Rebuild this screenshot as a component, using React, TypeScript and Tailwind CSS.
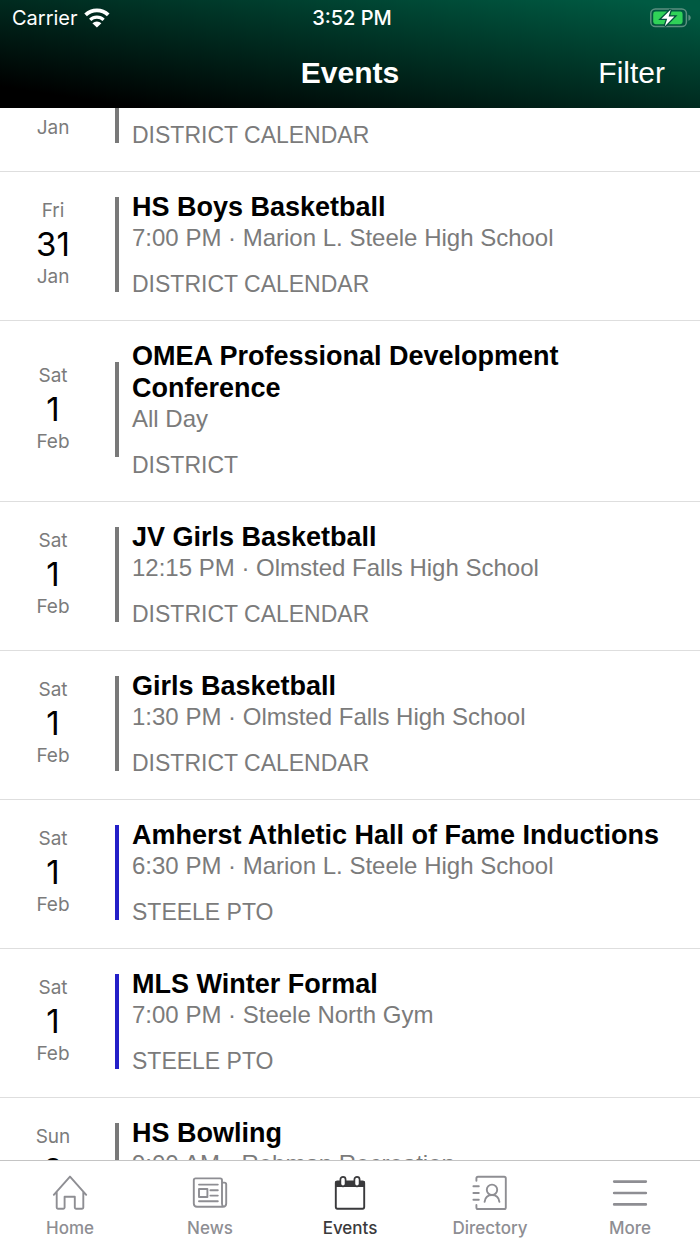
import React, { useLayoutEffect, useRef } from 'react';

interface SchoolEvent {
  weekday: string;
  day: string;
  month: string;
  title: string;
  time: string;
  calendar: string;
  pto?: boolean;
}

const EVENTS: SchoolEvent[] = [
  { weekday: '', day: '', month: 'Jan', title: '', time: '', calendar: 'DISTRICT CALENDAR' },
  { weekday: 'Fri', day: '31', month: 'Jan', title: 'HS Boys Basketball', time: '7:00 PM · Marion L. Steele High School', calendar: 'DISTRICT CALENDAR' },
  { weekday: 'Sat', day: '1', month: 'Feb', title: 'OMEA Professional Development Conference', time: 'All Day', calendar: 'DISTRICT' },
  { weekday: 'Sat', day: '1', month: 'Feb', title: 'JV Girls Basketball', time: '12:15 PM · Olmsted Falls High School', calendar: 'DISTRICT CALENDAR' },
  { weekday: 'Sat', day: '1', month: 'Feb', title: 'Girls Basketball', time: '1:30 PM · Olmsted Falls High School', calendar: 'DISTRICT CALENDAR' },
  { weekday: 'Sat', day: '1', month: 'Feb', title: 'Amherst Athletic Hall of Fame Inductions', time: '6:30 PM · Marion L. Steele High School', calendar: 'STEELE PTO', pto: true },
  { weekday: 'Sat', day: '1', month: 'Feb', title: 'MLS Winter Formal', time: '7:00 PM · Steele North Gym', calendar: 'STEELE PTO', pto: true },
  { weekday: 'Sun', day: '2', month: 'Feb', title: 'HS Bowling', time: '9:00 AM · Rebman Recreation', calendar: 'DISTRICT CALENDAR' },
];

const WifiIcon = () => (
  <svg width="26" height="20" viewBox="0 0 26 20" fill="none" stroke="white" aria-hidden="true">
    <path d="M1.6 6.9a16.3 16.3 0 0 1 22.6 0" strokeWidth="3.8" />
    <path d="M6.2 11.8a9.6 9.6 0 0 1 13.4 0" strokeWidth="3.2" />
    <path d="M8.4 15.2a6.6 6.6 0 0 1 9 0L12.9 19.6z" fill="white" stroke="none" />
  </svg>
);

const BatteryIcon = () => (
  <svg width="42" height="20" viewBox="0 0 42 20" aria-hidden="true">
    <rect x="0.8" y="1" width="35.6" height="17.6" rx="4.6" fill="none" stroke="#5c8f80" strokeWidth="1.5" />
    <path d="M38.4 6.8c1.6.5 2.3 1.6 2.3 3s-.7 2.5-2.3 3z" fill="#5c8f80" />
    <rect x="3.2" y="3.6" width="29.4" height="12.6" rx="2.4" fill="#30d158" />
    <path d="M20.8 1.6 11.4 10.8h5.8l-2.4 7.4L24.4 8.6h-5.8z" fill="white" stroke="#004f3b" strokeWidth="2.6" paintOrder="stroke" />
  </svg>
);

const HomeIcon = () => (
  <svg width="36" height="36" viewBox="0 0 36 36" fill="none" stroke="currentColor" strokeWidth="1.9" strokeLinecap="round" strokeLinejoin="round" aria-hidden="true">
    <path d="M1.8 19.8 18 1.6l16.2 18.2M4.7 17v15.6q0 1.2 1.2 1.2h5.5q1.2 0 1.2-1.2V21.8h10.2v10.8q0 1.2 1.2 1.2h6.1q1.2 0 1.2-1.2V17" />
  </svg>
);

const NewsIcon = () => (
  <svg width="36" height="36" viewBox="0 0 36 36" fill="none" stroke="currentColor" strokeWidth="1.9" strokeLinecap="round" strokeLinejoin="round" aria-hidden="true">
    <path d="M30 28.5V5.2q0-1.8-1.8-1.8H3.6q-1.8 0-1.8 1.8v23.4q0 3.2 3.2 3.2h26q3.2 0 3.2-3.2V9.4q0-1.8-1.8-1.8H30M30 28.5q0 2.2 1.2 3" />
    <path d="M7 9.6h18.8M7 26.2h18.8M18.4 15.2h7.4M18.4 20.6h7.4M7 14h8.4v8H7z" />
  </svg>
);

const EventsIcon = () => (
  <svg width="36" height="36" viewBox="0 0 36 36" fill="none" stroke="currentColor" strokeLinejoin="round" aria-hidden="true">
    <path d="M3.4 6h29.2v6H3.4z" fill="currentColor" stroke="none" />
    <rect x="3.8" y="6.5" width="28.4" height="27.2" rx="1.6" strokeWidth="1.9" />
    <rect x="8.4" y="1.8" width="5.2" height="9.6" rx="2.6" fill="white" strokeWidth="1.7" />
    <rect x="22.4" y="1.8" width="5.2" height="9.6" rx="2.6" fill="white" strokeWidth="1.7" />
  </svg>
);

const DirectoryIcon = () => (
  <svg width="36" height="36" viewBox="0 0 36 36" fill="none" stroke="currentColor" strokeWidth="1.9" strokeLinecap="round" strokeLinejoin="round" aria-hidden="true">
    <path d="M4.4 5.8V3.4q0-1.6 1.6-1.6h26.2q1.6 0 1.6 1.6v29q0 1.6-1.6 1.6H6q-1.6 0-1.6-1.6V30" />
    <path d="M1.4 11.2h5.4M1.4 18h5.4M1.4 24.8h5.4" />
    <circle cx="20" cy="14.8" r="5.2" />
    <path d="M12.6 26.8c.6-4.2 3.3-6.8 7.4-6.8s6.8 2.6 7.4 6.8" />
  </svg>
);

const MoreIcon = () => (
  <svg width="36" height="36" viewBox="0 0 36 36" fill="none" stroke="currentColor" strokeWidth="2.7" strokeLinecap="round" aria-hidden="true">
    <path d="M2.2 6.6h31.6M2.2 18h31.6M2.2 29.4h31.6" />
  </svg>
);

const TABS = [
  { label: 'Home', icon: HomeIcon },
  { label: 'News', icon: NewsIcon },
  { label: 'Events', icon: EventsIcon, active: true },
  { label: 'Directory', icon: DirectoryIcon },
  { label: 'More', icon: MoreIcon },
];

const EventRow = ({ event }: { event: SchoolEvent }) => (
  <li className="flex items-center border-b border-[#dedede] pt-4 pb-5">
    <div className="flex w-[106px] shrink-0 flex-col items-center font-[Inter,sans-serif] text-[19px] text-[#7b7b7b]">
      <span className="h-8 leading-8">{event.weekday}</span>
      <span className="h-[34px] text-[33px] leading-[34px] text-black">{event.day}</span>
      <span className="h-8 leading-8">{event.month}</span>
    </div>
    <div className={`ml-[9px] h-[95px] w-1 shrink-0 ${event.pto ? 'bg-[#2420c8]' : 'bg-[#797979]'}`} />
    <div className="min-w-0 flex-1 pt-[3px] pr-8 pb-px pl-[13px] text-[#7b7b7b]">
      <h2 className="min-h-8 text-[27px] leading-8 font-bold text-black">{event.title}</h2>
      <p className="min-h-[30px] text-[24px] leading-[30px]">{event.time}</p>
      <p className="mt-4 text-[23px] leading-[30px]">{event.calendar}</p>
    </div>
  </li>
);

const App: React.FC = () => {
  const listRef = useRef<HTMLElement>(null);

  // Open part of the way down the list
  useLayoutEffect(() => {
    if (listRef.current) listRef.current.scrollTop = 85;
  }, []);

  return (
    <div className="flex h-screen flex-col bg-white font-['Liberation_Sans',Arial,sans-serif]">
      <header className="shrink-0 bg-linear-to-tr/srgb from-black from-10% to-[#005a42] to-95% text-white">
        <div className="grid h-9 grid-cols-3 items-center pr-2 pl-3 font-[Inter,sans-serif] text-[20px]">
          <div className="flex items-center gap-1.5">
            <span>Carrier</span>
            <WifiIcon />
          </div>
          <span className="text-center font-medium">3:52 PM</span>
          <div className="flex justify-end">
            <BatteryIcon />
          </div>
        </div>
        <div className="grid h-[72px] grid-cols-3 items-center px-[35px]">
          <h1 className="col-start-2 text-center text-[30px] font-bold">Events</h1>
          <button type="button" className="justify-self-end text-[30px]">Filter</button>
        </div>
      </header>

      <main ref={listRef} className="min-h-0 flex-1 overflow-y-auto [scrollbar-width:none]">
        <ul>
          {EVENTS.map((event, i) => (
            <EventRow key={i} event={event} />
          ))}
        </ul>
      </main>

      <nav className="grid h-[84px] shrink-0 grid-cols-5 border-t border-[#c4c4c4] bg-white font-[Inter,sans-serif]">
        {TABS.map(({ label, icon: Icon, active }) => (
          <a
            key={label}
            href={`#${label.toLowerCase()}`}
            aria-current={active ? 'page' : undefined}
            className={`flex flex-col items-center gap-1 pt-[14px] text-[17px] leading-[26px] font-medium ${active ? 'text-[#3a3a3c]' : 'text-[#8e8e93]'}`}
          >
            <Icon />
            {label}
          </a>
        ))}
      </nav>
    </div>
  );
};

export default App;
